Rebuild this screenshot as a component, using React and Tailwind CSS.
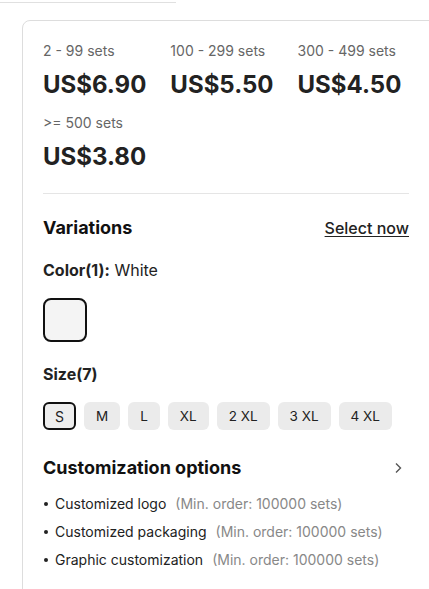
import React from "react";

const tiers = [
  { q: "2 - 99 sets", p: "US$6.90" },
  { q: "100 - 299 sets", p: "US$5.50" },
  { q: "300 - 499 sets", p: "US$4.50" },
  { q: ">= 500 sets", p: "US$3.80" },
];
const sizes = ["S", "M", "L", "XL", "2 XL", "3 XL", "4 XL"];
const opts = ["Customized logo", "Customized packaging", "Graphic customization"];

export default function App() {
  return (
    <div className="w-[429px] h-[589px] overflow-hidden bg-white font-['Inter',sans-serif] text-[#222]">
      <div className="h-[3px] w-[176px] border-b border-[#e0e0e0]" />
      <div className="ml-[22px] mt-[17px] w-[420px] rounded-[8px] border border-[#dddddd] pl-[20px] pr-[32px] pt-[21px] pb-[40px]">
        <div className="flex flex-wrap gap-x-[24px] gap-y-[13px]">
          {tiers.map((t) => (
            <div key={t.q} className="flex flex-col">
              <div className="text-[14px] leading-[18px] text-[#666]">{t.q}</div>
              <div className="mt-[9px] text-[24px] leading-[32px] font-bold text-[#222]">{t.p}</div>
            </div>
          ))}
        </div>
        <div className="mt-[20px] border-t border-[#e5e5e5]" />
        <div className="mt-[21px] flex items-center justify-between">
          <div className="text-[18px] leading-[26px] font-bold text-[#111]">Variations</div>
          <div className="text-[16px] leading-[24px] font-medium underline underline-offset-2 text-[#222]">Select now</div>
        </div>
        <div className="mt-[19px] text-[16px] leading-[20px] text-[#222]">
          <span className="font-bold">Color(1):</span> White
        </div>
        <div className="mt-[18px] h-[44px] w-[44px] rounded-[8px] border-2 border-[#111] bg-[#f4f4f4]" />
        <div className="mt-[22px] text-[16px] leading-[20px] font-bold text-[#222]">Size(7)</div>
        <div className="mt-[18px] flex gap-[8px]">
          {sizes.map((s, i) => (
            <div
              key={s}
              className={
                i === 0
                  ? "h-[28px] px-[10px] flex items-center rounded-[6px] border-2 border-[#111] bg-[#eeeeee] text-[14px] text-[#222]"
                  : "h-[28px] px-[12px] flex items-center rounded-[6px] bg-[#ebebeb] text-[13.5px] text-[#222]"
              }
            >
              {s}
            </div>
          ))}
        </div>
        <div className="mt-[25px] flex items-center justify-between">
          <div className="text-[18px] leading-[26px] font-bold text-[#111]">Customization options</div>
          <svg width="16" height="16" viewBox="0 0 16 16" fill="none" className="mr-[3px]">
            <path d="M6 3.5 L10.5 8 L6 12.5" stroke="#555" strokeWidth="1.4" />
          </svg>
        </div>
        <div className="mt-[13px] flex flex-col gap-[8px]">
          {opts.map((o) => (
            <div key={o} className="flex items-center text-[14px] leading-[20px]">
              <span className="w-[4px] h-[4px] rounded-full bg-[#222] ml-[1px] mr-[7px]" />
              <span className="text-[#222]">{o}</span>
              <span className="ml-[9px] text-[#888]">(Min. order: 100000 sets)</span>
            </div>
          ))}
        </div>
      </div>
    </div>
  );
}
